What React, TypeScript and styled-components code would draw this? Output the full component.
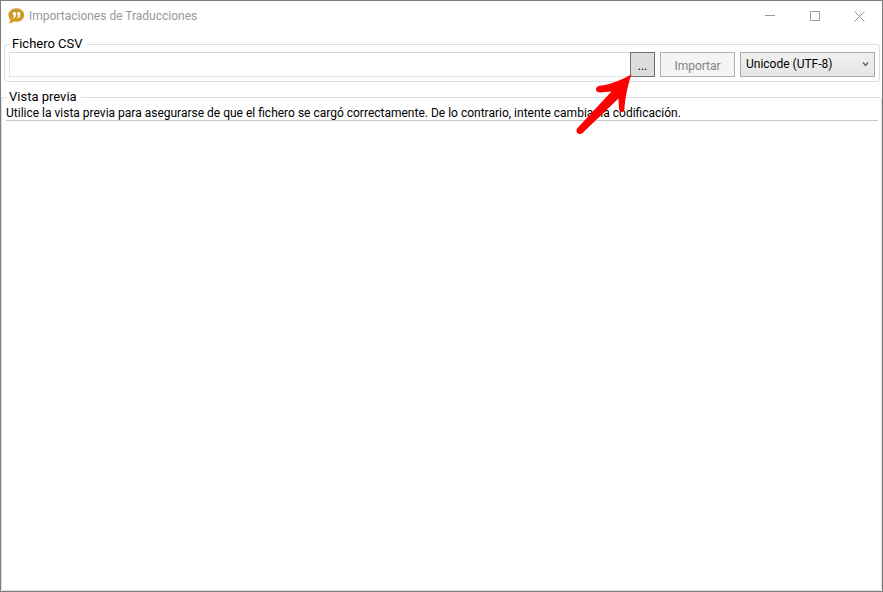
import React from "react";
import styled, { createGlobalStyle } from "styled-components";

const GlobalStyle = createGlobalStyle`
  *, *::before, *::after { box-sizing: border-box; }
  html, body { margin: 0; padding: 0; background: #fff; }
  body, button, input, select {
    font-family: Roboto, "Open Sans", "Liberation Sans", sans-serif;
    font-size: 12px;
    color: #000;
  }
`;

const Window = styled.main`
  display: flex;
  flex-direction: column;
  min-height: 100vh;
  border: 1px solid #7d7d7d;
  background: #fff;
`;

const TitleBar = styled.header`
  display: flex;
  align-items: center;
  height: 30px;
  padding-left: 7px;
`;

const Title = styled.h1`
  flex: 1;
  margin: 0 0 0 4px;
  font-size: 12px;
  font-weight: 400;
  line-height: 16px;
  color: #999;
`;

const CaptionButton = styled.button`
  display: grid;
  place-items: center;
  width: 45px;
  height: 30px;
  padding: 0;
  border: 0;
  background: transparent;
  color: #999;
`;

const Group = styled.fieldset<{ $fill?: boolean }>`
  min-width: 0;
  margin: ${(p) => (p.$fill ? "7px 0 0" : "5px 2px 0 3px")};
  padding: ${(p) => (p.$fill ? "0 3px 0 4px" : "0 4px 4px")};
  flex: ${(p) => (p.$fill ? "1" : "none")};
  border: 1px solid #d5dfe5;
  border-radius: 3px;
`;

const Legend = styled.legend`
  margin-left: 1px;
  padding: 0 4px 0 2px;
  font-size: 13px;
  line-height: 16px;
`;

const Row = styled.div`
  display: flex;
  height: 25px;
`;

const PathInput = styled.input`
  flex: 1;
  min-width: 0;
  padding: 0 4px;
  border: 1px solid #e3e3e3;
  border-top-color: #d4d7da;
  border-right: 0;
  outline: 0;
  background: #fff;
`;

const BrowseSlot = styled.div`
  position: relative;
  display: flex;
`;

const PushButton = styled.button<{ $width: number }>`
  width: ${(p) => p.$width}px;
  padding: 3px 0 0;
  border: 1px solid #707070;
  background: #ddd;
  line-height: 16px;

  &:disabled {
    border-color: #adb2b5;
    background: #f4f4f4;
    color: #838383;
  }
`;

const ImportSlot = styled.div`
  display: flex;
  margin: 0 5px;
`;

const SelectWrap = styled.div`
  position: relative;
  display: flex;
  width: 135px;
`;

const EncodingSelect = styled.select`
  appearance: none;
  width: 100%;
  padding: 0 20px 2px 5px;
  border: 1px solid #acacac;
  border-radius: 0;
  background: linear-gradient(#f0f0f0, #e5e5e5);
`;

const Chevron = styled.svg`
  position: absolute;
  top: 9px;
  right: 6px;
  pointer-events: none;
`;

const Pointer = styled.svg`
  position: absolute;
  top: 13px;
  right: 21px;
  z-index: 1;
  pointer-events: none;
`;

const Hint = styled.p`
  margin: 0;
  padding-top: 1px;
  border-bottom: 1px solid #c8c8c8;
  line-height: 14px;
  white-space: nowrap;
`;

function AppIcon() {
  return (
    <svg width="17" height="17" viewBox="0 0 17 17" aria-hidden="true">
      <path
        d="M8.5 0.3C12.9 0.3 16.2 3.2 16.2 7S12.9 13.8 8.5 13.8C7.6 13.8 6.7 13.7 5.9 13.4C4.7 14.5 3 15.4 0.8 15.3C1.9 14.2 2.4 12.9 2.3 11.6C1.1 10.4 0.4 8.8 0.4 7C0.4 3.2 4.1 0.3 8.5 0.3Z"
        fill="#cf9a27"
      />
      <path
        d="M4.9 4.3H7.8V7.2C7.8 8.9 6.9 9.9 5.2 10.2V9C6 8.7 6.3 8.2 6.3 7.3H4.9ZM9.2 4.3H12.1V7.2C12.1 8.9 11.2 9.9 9.500 10.2V9C10.3 8.7 10.6 8.2 10.6 7.3H9.2Z"
        fill="#fff"
      />
    </svg>
  );
}

function ArrowPointer() {
  return (
    <Pointer width="64" height="72" viewBox="0 0 64 72" aria-hidden="true">
      <path
        d="M61.5 9.500C57.500 21 55 34 54.500 44C54 48 49.500 48 49 44L48.500 33.500L12.500 68C9 71 4.500 67 7.500 63L41.500 26.500L30 27.500C25 27.500 24.500 22 29.500 20.800C41 19.500 52 14.500 61.500 9.500Z"
        fill="#fe0000"
      />
    </Pointer>
  );
}

export default function App() {
  return (
    <>
      <GlobalStyle />
      <Window>
        <TitleBar>
          <AppIcon />
          <Title>Importaciones de Traducciones</Title>
          <CaptionButton aria-label="Minimizar">
            <svg width="10" height="10" stroke="currentColor">
              <path d="M0 4.500H10" />
            </svg>
          </CaptionButton>
          <CaptionButton aria-label="Maximizar">
            <svg width="10" height="10" stroke="currentColor" fill="none">
              <path d="M.5 .5H9.500V9.500H.5Z" />
            </svg>
          </CaptionButton>
          <CaptionButton aria-label="Cerrar">
            <svg width="11" height="11" stroke="currentColor">
              <path d="M.5 .5L10.500 10.500M10.500 .5L.5 10.500" />
            </svg>
          </CaptionButton>
        </TitleBar>

        <Group>
          <Legend>Fichero CSV</Legend>
          <Row>
            <PathInput type="text" aria-label="Fichero CSV" />
            <BrowseSlot>
              <PushButton $width={25} aria-label="Examinar">...</PushButton>
              <ArrowPointer />
            </BrowseSlot>
            <ImportSlot>
              <PushButton $width={75} disabled>Importar</PushButton>
            </ImportSlot>
            <SelectWrap>
              <EncodingSelect aria-label="Codificación" defaultValue="utf-8">
                <option value="utf-8">Unicode (UTF-8)</option>
              </EncodingSelect>
              <Chevron width="7" height="7" viewBox="0 0 7 7" aria-hidden="true">
                <path d="M1 1.500L3.500 4.500L6 1.500" fill="none" stroke="#606060" strokeWidth="1.300" />
              </Chevron>
            </SelectWrap>
          </Row>
        </Group>

        <Group $fill>
          <Legend>Vista previa</Legend>
          <Hint>
            Utilice la vista previa para asegurarse de que el fichero se cargó correctamente. De lo contrario, intente cambiar la codificación.
          </Hint>
        </Group>
      </Window>
    </>
  );
}
